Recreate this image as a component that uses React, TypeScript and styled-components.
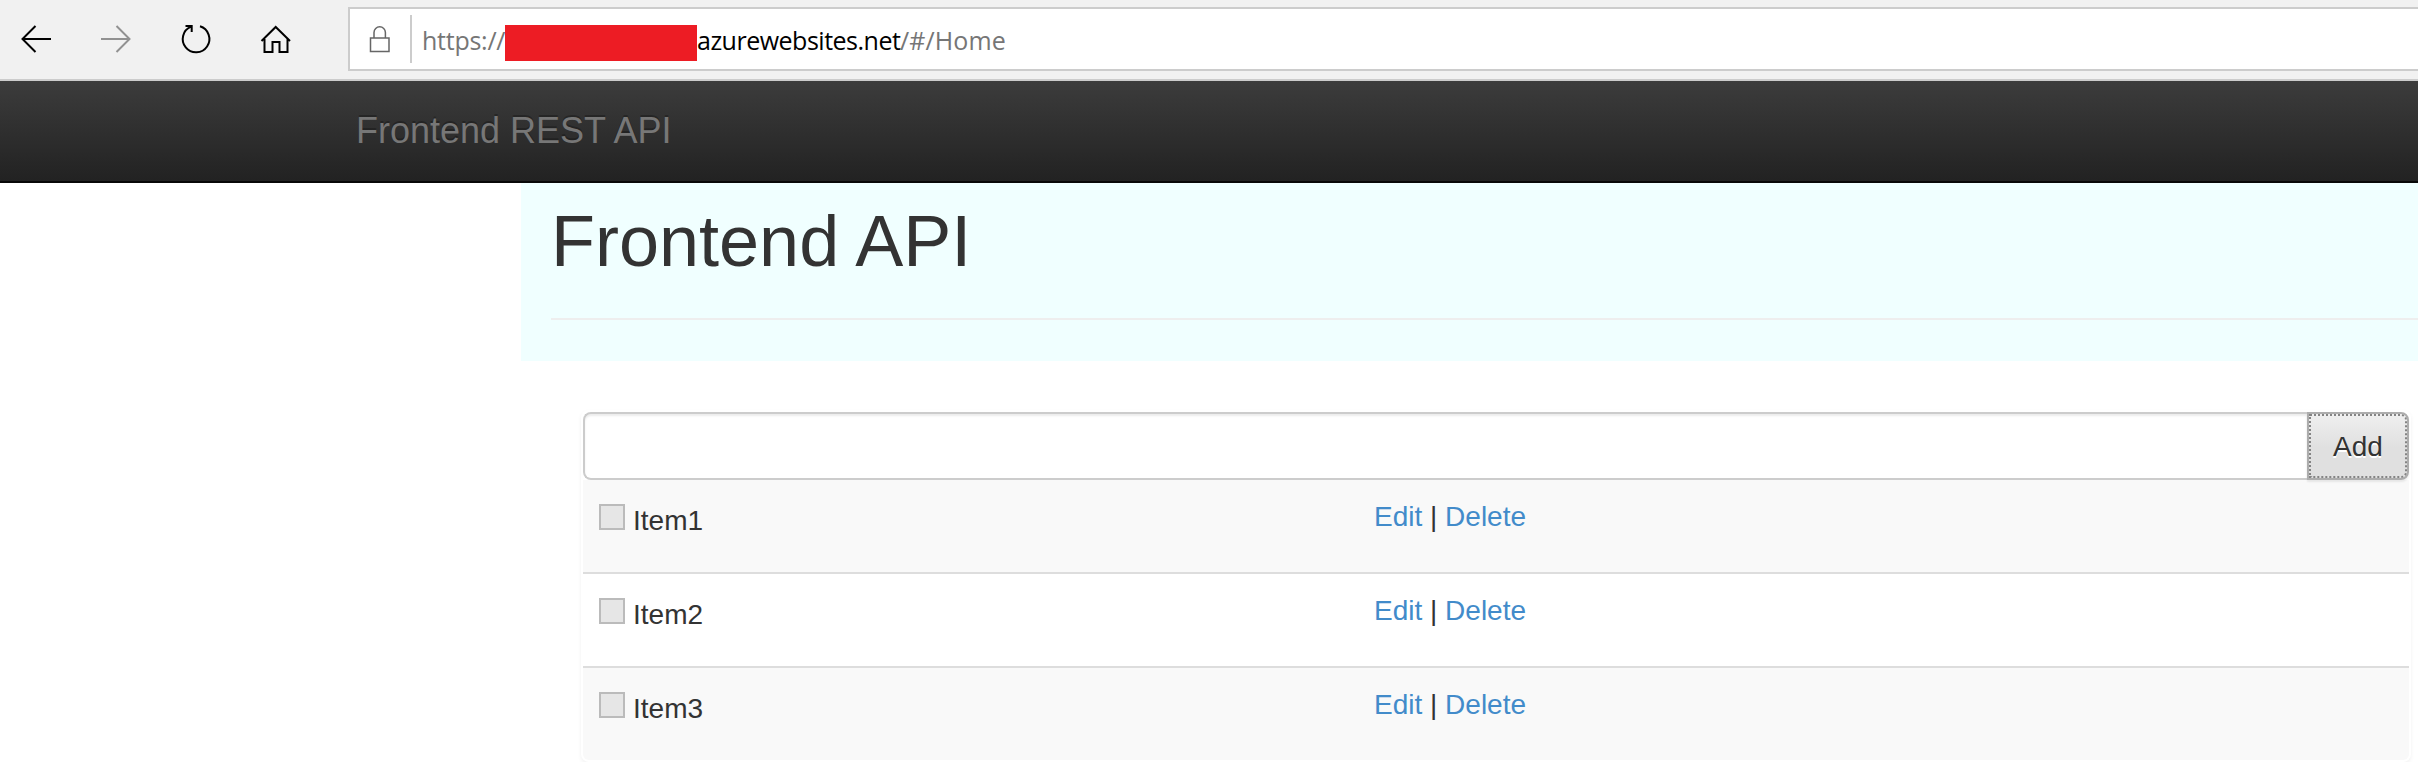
import React from "react";
import styled, { createGlobalStyle } from "styled-components";

const Global = createGlobalStyle`
  * { box-sizing: border-box; }
  body { margin: 0; background: #fff; color: #333; overflow: hidden;
    font: 28px/40px "Liberation Sans", Arial, sans-serif; }
`;
const BrowserBar = styled.header`
  display: flex; height: 81px; padding: 7px 0 8px;
  background: #f1f1f1; border-bottom: 2px solid #ccc;
`;
const NavButtons = styled.nav`
  display: flex; gap: 40px; width: 348px; padding: 12px 0 0 16px; flex: none;
`;
const NavIcon = styled.svg<{ $muted?: boolean }>`
  width: 40px; height: 40px; fill: none; stroke-width: 2;
  stroke: ${(p) => (p.$muted ? "#919191" : "#000")};
`;
const AddressBar = styled.div`
  display: flex; flex: 1; height: 64px; background: #fff;
  border: 2px solid #ccc; border-right: 0;
`;
const LockIcon = styled.svg`
  width: 24px; height: 32px; margin: 14px 0 0 17px; fill: none;
  stroke: #666; stroke-width: 1.5;
`;
const Separator = styled.div`
  width: 2px; height: 48px; margin: 6px 10px 0 19px; background: #ccc;
`;
const Url = styled.div`
  display: flex; font: 25px/36px "Open Sans", "Noto Sans", sans-serif;
  padding-top: 13px; color: #767676; white-space: nowrap;
`;
const UrlPart = styled.span<{ $w: number; $spacing: number; $host?: boolean }>`
  width: ${(p) => p.$w}px; letter-spacing: ${(p) => p.$spacing}px;
  color: ${(p) => (p.$host ? "#000" : "inherit")};
`;
const Redaction = styled.span`
  width: 192px; height: 36px; margin-top: 3px; background: #ed1c24;
`;
const Navbar = styled.div`
  height: 102px; padding: 30px 0 0 356px;
  background: linear-gradient(#3c3c3c, #222); border-bottom: 2px solid #080808;
  color: #777; font-size: 36px; line-height: 40px;
  text-shadow: 0 -2px 0 rgba(0, 0, 0, 0.25);
`;
const Main = styled.main`
  margin-left: 521px;
`;
const Hero = styled.section`
  height: 178px; padding: 18px 0 0 30px; background: #f0ffff;
`;
const Title = styled.h1`
  margin: 0; font-size: 72px; line-height: 80px; font-weight: 400;
`;
const Rule = styled.hr`
  height: 2px; margin: 37px 0 0; border: 0; background: #eee;
`;
const Panel = styled.section`
  width: 1830px; margin: 49px 0 0 60px; border: 2px solid transparent;
  border-radius: 8px; box-shadow: 0 2px 4px rgba(0, 0, 0, 0.06);
`;
const InputGroup = styled.div`
  display: flex; height: 68px;
`;
const TextInput = styled.input`
  flex: 1; min-width: 0; border: 2px solid #ccc; border-right: 0;
  border-radius: 8px 0 0 8px; background: #fff; padding: 0 24px;
  box-shadow: inset 0 2px 2px rgba(0, 0, 0, 0.075); font: inherit;
`;
const AddButton = styled.button`
  width: 102px; padding: 2px 0 0; border: 2px solid #adadad; border-radius: 0 8px 8px 0;
  background: linear-gradient(#efefef, #e0e0e0 34px, #e0e0e0);
  outline: 2px dotted #848484; outline-offset: -4px;
  box-shadow: 0 2px 2px rgba(0, 0, 0, 0.075);
  color: #333; font: inherit; text-shadow: 0 2px 0 #fff;
`;
const List = styled.ul`
  margin: 0; padding: 0; list-style: none; border-radius: 0 0 6px 6px; overflow: hidden;
`;
const Row = styled.li`
  display: flex; height: 94px; padding: 17px 16px 15px;
  border-bottom: 2px solid #ddd;
  &:nth-child(odd) { background: #f9f9f9; }
  &:last-child { height: 92px; border-bottom: 0; }
`;
const ItemLabel = styled.label`
  display: flex; width: 775px; padding-top: 4px;
`;
const Check = styled.input`
  appearance: none; width: 26px; height: 26px; margin: 3px 8px 0 0;
  border: 2px solid #bbb; background: #e6e6e6;
`;
const Link = styled.a`
  color: #428bca; text-decoration: none;
`;

export default function App() {
  return (
    <>
      <Global />
      <BrowserBar>
        <NavButtons>
          <NavIcon viewBox="0 0 40 40"><path d="M35 20H7M19.500 7L6.500 20l13 13" /></NavIcon>
          <NavIcon viewBox="0 0 40 40" $muted><path d="M5 20H33M20.500 7L33.500 20l-13 13" /></NavIcon>
          <NavIcon viewBox="0 0 40 40"><path d="M24 7.300A13.300 13.300 0 1 1 15 7.700M9.500 7H15.700V13" /></NavIcon>
          <NavIcon viewBox="0 0 40 40"><path d="M5.500 22L19.700 8L34 22M8.500 20V33H16.500V23H23.500V33H31.500V20" /></NavIcon>
        </NavButtons>
        <AddressBar>
          <LockIcon viewBox="0 0 24 32"><path d="M3.500 15H22V28.500H3.500ZM7 15V9.500a5.700 5.700 0 0 1 11.400 0V15" /></LockIcon>
          <Separator />
          <Url>
            <UrlPart $w={83} $spacing={-0.25}>https://</UrlPart>
            <Redaction />
            <UrlPart $w={203} $spacing={-0.5} $host>azurewebsites.net</UrlPart>
            <UrlPart $w={106} $spacing={0.1}>/#/Home</UrlPart>
          </Url>
        </AddressBar>
      </BrowserBar>
      <Navbar>Frontend REST API</Navbar>
      <Main>
        <Hero>
          <Title>Frontend API</Title>
          <Rule />
        </Hero>
        <Panel>
          <InputGroup>
            <TextInput aria-label="New item" />
            <AddButton>Add</AddButton>
          </InputGroup>
          <List>
            {["Item1", "Item2", "Item3"].map((name) => (
              <Row key={name}>
                <ItemLabel><Check type="checkbox" disabled />{name}</ItemLabel>
                <span><Link href="#edit">Edit</Link> | <Link href="#delete">Delete</Link></span>
              </Row>
            ))}
          </List>
        </Panel>
      </Main>
    </>
  );
}
